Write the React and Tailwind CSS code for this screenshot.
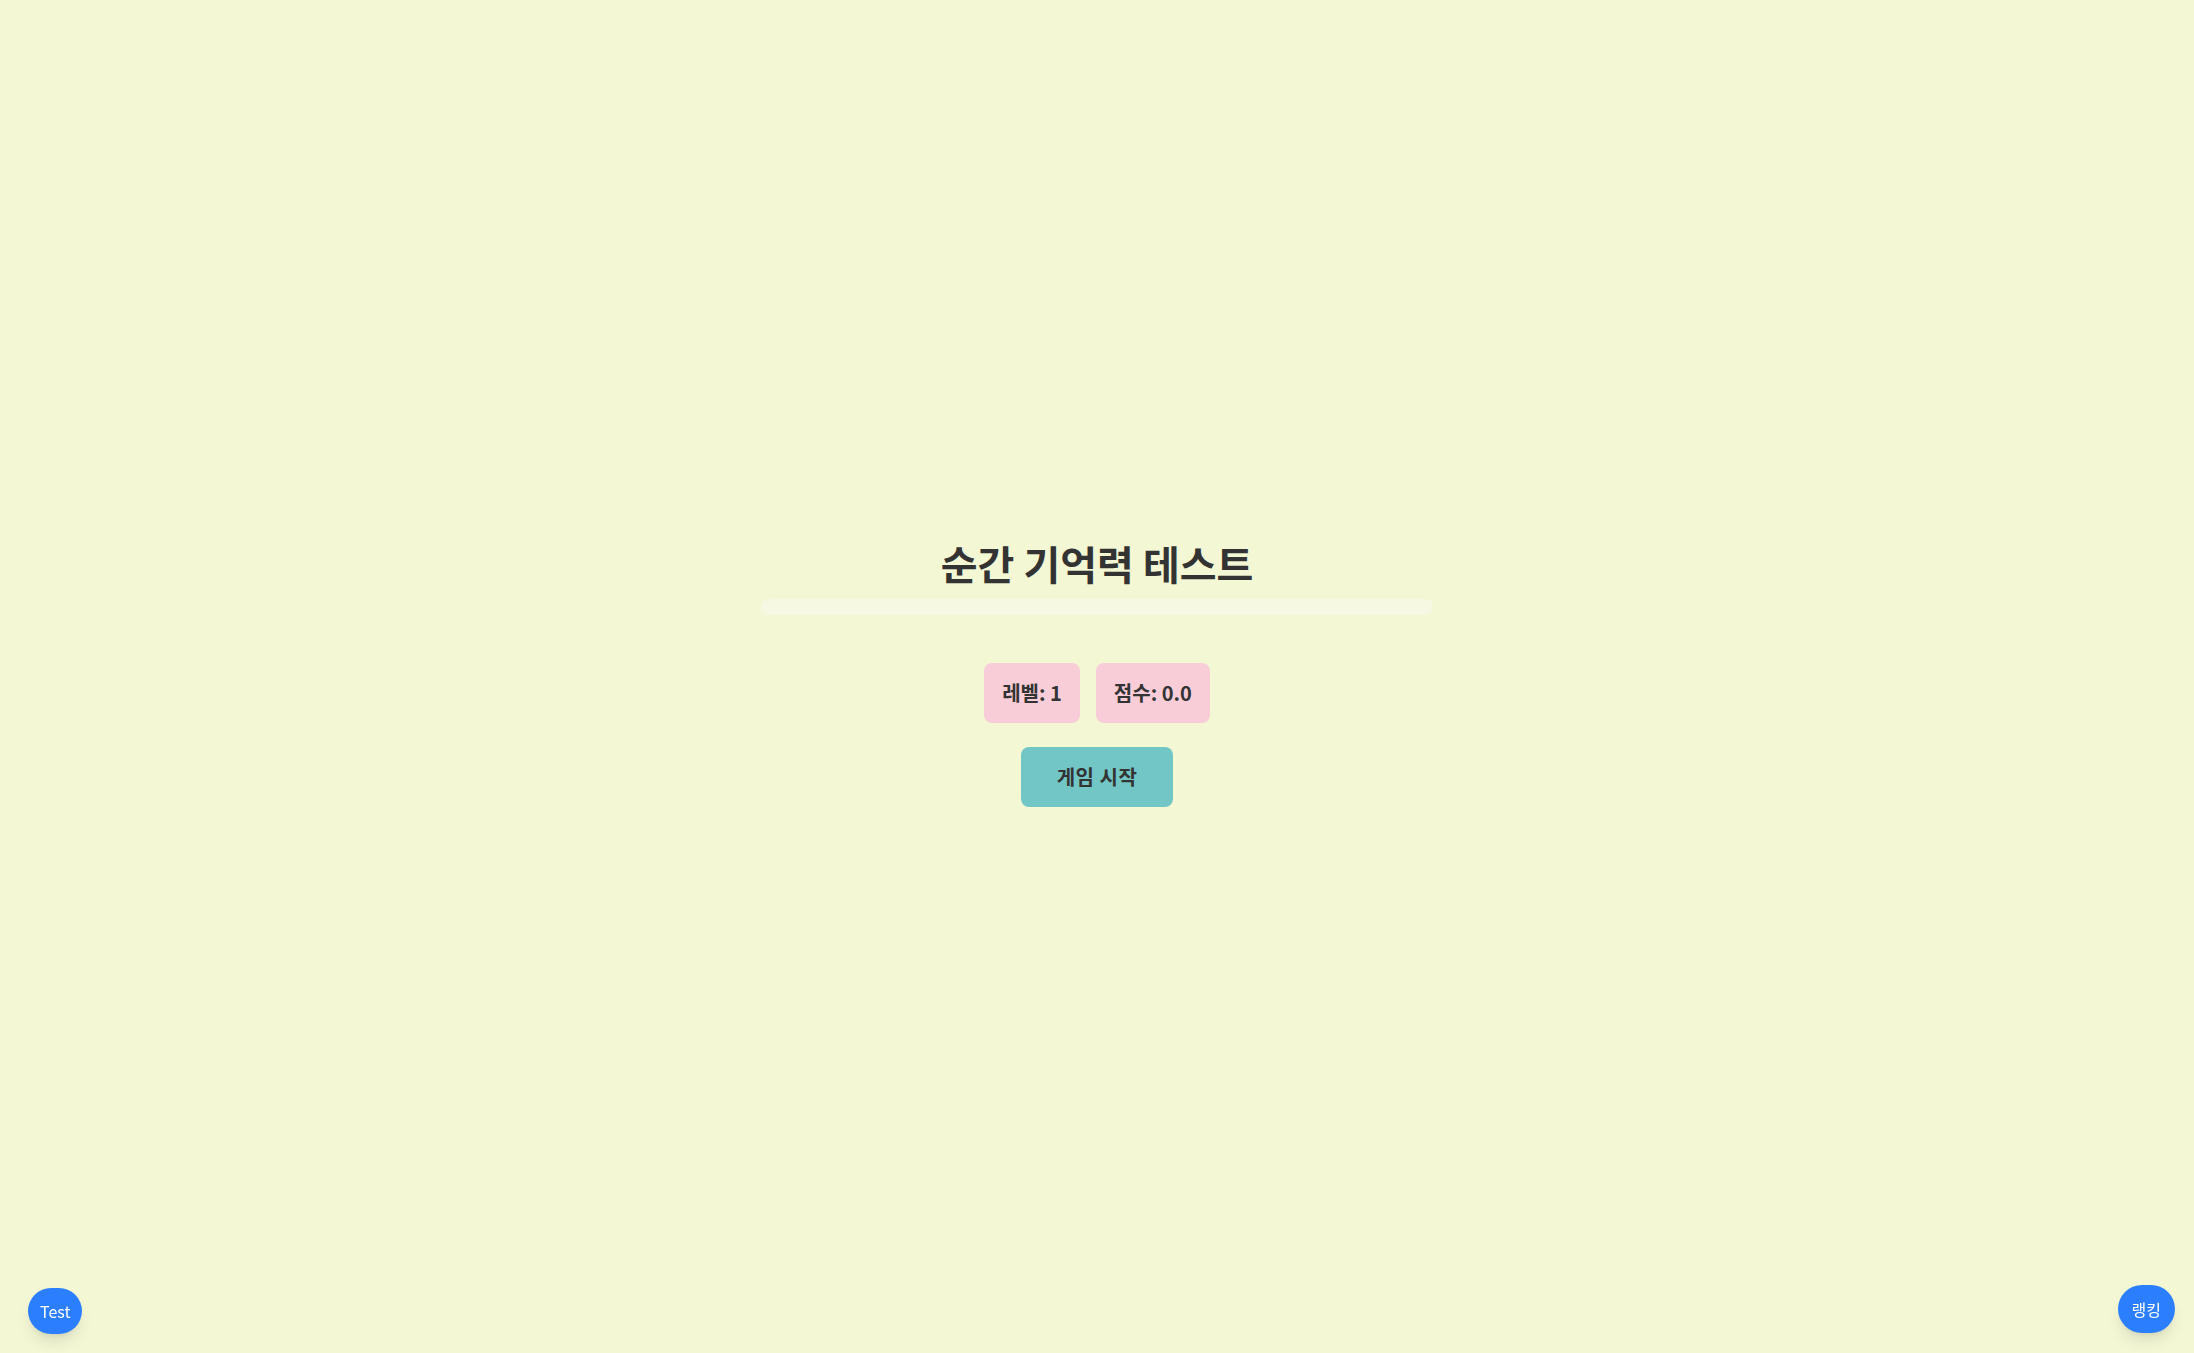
import React, { useState } from 'react';

const FONT = { fontFamily: '"Noto Sans CJK KR", "Noto Sans", sans-serif' };

export default function App() {
  const [level] = useState(1);
  const [score] = useState(0);

  return (
    <div className="min-h-screen bg-[#f3f7d4] text-[#333333] flex flex-col items-center justify-center pb-[4px]" style={FONT}>
      <h1 className="text-[40px] font-bold leading-10 mb-4">순간 기억력 테스트</h1>
      <div className="w-full max-w-2xl h-4 rounded-full bg-[#f6f8e2] mb-12" />

      <div className="flex gap-4 mb-6">
        <div className="px-[18px] py-4 rounded-lg bg-[#f8cdd8] text-xl font-bold leading-7">레벨: {level}</div>
        <div className="px-[18px] py-4 rounded-lg bg-[#f8cdd8] text-xl font-bold leading-7">점수: {score.toFixed(1)}</div>
      </div>

      <button className="px-9 py-4 rounded-lg bg-[#72c7c6] text-xl font-bold leading-7 tracking-wide text-[#333333]">
        게임 시작
      </button>

      <button className="fixed left-7 bottom-[19px] px-3 py-[11px] rounded-full bg-blue-500 text-white text-base leading-6 shadow-lg">
        Test
      </button>
      <button className="fixed right-[19px] bottom-5 px-[14px] py-3 rounded-full bg-blue-500 text-white text-base leading-6 shadow-lg">
        랭킹
      </button>
    </div>
  );
}
